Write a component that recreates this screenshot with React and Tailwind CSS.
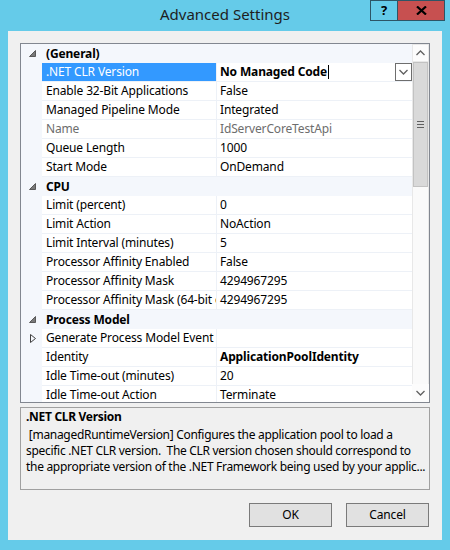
import React from 'react';

const rows = [
    { cat: '(General)' },
    { name: '.NET CLR Version', value: 'No Managed Code', selected: true, bold: true },
    { name: 'Enable 32-Bit Applications', value: 'False' },
    { name: 'Managed Pipeline Mode', value: 'Integrated' },
    { name: 'Name', value: 'IdServerCoreTestApi', dim: true },
    { name: 'Queue Length', value: '1000' },
    { name: 'Start Mode', value: 'OnDemand' },
    { cat: 'CPU' },
    { name: 'Limit (percent)', value: '0' },
    { name: 'Limit Action', value: 'NoAction' },
    { name: 'Limit Interval (minutes)', value: '5' },
    { name: 'Processor Affinity Enabled', value: 'False' },
    { name: 'Processor Affinity Mask', value: '4294967295' },
    { name: 'Processor Affinity Mask (64-bit option)', value: '4294967295' },
    { cat: 'Process Model' },
    { name: 'Generate Process Model Event Log Entry', value: '', expand: true },
    { name: 'Identity', value: 'ApplicationPoolIdentity', bold: true },
    { name: 'Idle Time-out (minutes)', value: '20' },
    { name: 'Idle Time-out Action', value: 'Terminate' },
];

const Chevron = ({ up }) => (
    <svg width="9" height="6" viewBox="0 0 9 6">
        <path d={up ? 'M0.5 5 L4.5 1 L8.5 5' : 'M0.5 1 L4.5 5 L8.5 1'} fill="none" stroke="#606060" strokeWidth="1.3" />
    </svg>
);

const GridRow = ({ row }) => {
    if (row.cat) {
        return (
            <div className="flex h-[19px] shrink-0 items-center bg-[#f4f7fc]">
                <div className="flex w-[21px] justify-center pl-[2px]">
                    <svg width="7" height="7" viewBox="0 0 7 7">
                        <polygon points="6.5,0.5 6.5,6.5 0.5,6.5" fill="#7a7a7a" stroke="#595959" strokeWidth="1" />
                    </svg>
                </div>
                <span className="pl-[4px] font-bold text-black">{row.cat}</span>
            </div>
        );
    }
    return (
        <div className="flex h-[19px] shrink-0">
            <div className="flex w-[21px] items-center justify-center bg-[#f4f7fc] pl-[3px]">
                {row.expand && (
                    <svg width="6" height="9" viewBox="0 0 6 9">
                        <polygon points="0.5,0.5 5.5,4.5 0.5,8.5" fill="none" stroke="#404040" strokeWidth="1" />
                    </svg>
                )}
            </div>
            <div
                className={`flex w-[175px] items-center overflow-hidden whitespace-nowrap border-r border-b border-[#edf1f7] pl-[4px] ${
                    row.selected ? 'bg-[#3399ff] text-white' : row.dim ? 'bg-white text-[#6d6d6d]' : 'bg-white text-black'
                }`}
            >
                {row.name}
            </div>
            <div
                className={`flex flex-1 items-center overflow-hidden whitespace-nowrap border-b border-[#edf1f7] bg-white pl-[3px] ${
                    row.dim ? 'text-[#6d6d6d]' : 'text-black'
                } ${row.bold ? 'font-bold' : ''}`}
            >
                {row.value}
                {row.selected && (
                    <>
                        <span className="ml-[1px] h-[14px] w-[1px] bg-black" />
                        <span className="ml-auto flex h-[18px] w-[17px] items-center justify-center border border-[#6e6e6e] bg-white">
                            <Chevron />
                        </span>
                    </>
                )}
            </div>
        </div>
    );
};

function App() {
    return (
        <div
            className="flex h-[550px] w-[450px] flex-col bg-[#65cbe9] text-[12px] tracking-[-0.15px] text-black"
            style={{ fontFamily: '"Noto Sans", "Liberation Sans", sans-serif' }}
        >
            {/* title bar */}
            <div className="relative flex h-[31px] shrink-0 items-center justify-center">
                <span className="pb-[2px] text-[15px] tracking-normal text-[#1e1e1e]">Advanced Settings</span>
                <div className="absolute top-0 right-[5px] flex h-[21px]">
                    <div className="flex w-[28px] items-center justify-center border border-[#2d5566] bg-[#65cbe9] text-[13px] font-bold text-black">
                        ?
                    </div>
                    <div className="flex w-[47px] items-center justify-center border border-l-0 border-[#2d5566] bg-[#c75050]">
                        <svg width="11" height="9" viewBox="0 0 11 9">
                            <path d="M1 0.5 L10 8.5 M10 0.5 L1 8.5" stroke="#000" strokeWidth="2.2" />
                        </svg>
                    </div>
                </div>
            </div>

            {/* client area */}
            <div className="mx-[8px] flex h-[509px] flex-col bg-[#f0f0f0] px-[12px] pt-[12px]">
                {/* property grid */}
                <div className="flex h-[360px] shrink-0 border border-[#828790] bg-[#f4f7fc]">
                    <div className="flex flex-1 flex-col overflow-hidden">
                        {rows.map((r, i) => (
                            <GridRow key={i} row={r} />
                        ))}
                    </div>
                    <div className="flex w-[17px] flex-col bg-[#e8e8e8]">
                        <div className="flex h-[18px] items-center justify-center border border-[#e8e8e8] bg-[#fcfcfc]">
                            <Chevron up />
                        </div>
                        <div className="mx-[1px] flex h-[125px] items-center justify-center border border-[#c2c2c2] bg-[#d9d9d9]">
                            <div className="flex w-[7px] flex-col gap-[2px]">
                                <span className="h-[1px] bg-[#606060]" />
                                <span className="h-[1px] bg-[#606060]" />
                                <span className="h-[1px] bg-[#606060]" />
                            </div>
                        </div>
                        <div className="mx-[1px] flex-1 bg-[#fafafa]" />
                        <div className="flex h-[18px] items-center justify-center bg-[#fcfcfc]">
                            <Chevron />
                        </div>
                    </div>
                </div>

                {/* description */}
                <div className="mt-[4px] flex h-[83px] shrink-0 flex-col border border-[#a0a0a0] px-[5px] pt-[1px] leading-[16px] tracking-[-0.3px]">
                    <div className="pb-[2px] font-bold">.NET CLR Version</div>
                    <div className="whitespace-pre"> [managedRuntimeVersion] Configures the application pool to load a</div>
                    <div className="whitespace-pre">specific .NET CLR version.  The CLR version chosen should correspond to</div>
                    <div className="whitespace-pre">the appropriate version of the .NET Framework being used by your applic...</div>
                </div>

                {/* buttons */}
                <div className="mt-[13px] flex justify-end gap-[14px] pr-[1px]">
                    <button className="h-[24px] w-[83px] border border-[#7a7a7a] bg-[#e1e1e1] text-black">OK</button>
                    <button className="h-[24px] w-[83px] border border-[#7a7a7a] bg-[#e1e1e1] text-black">Cancel</button>
                </div>
            </div>
        </div>
    );
}

export default App;
